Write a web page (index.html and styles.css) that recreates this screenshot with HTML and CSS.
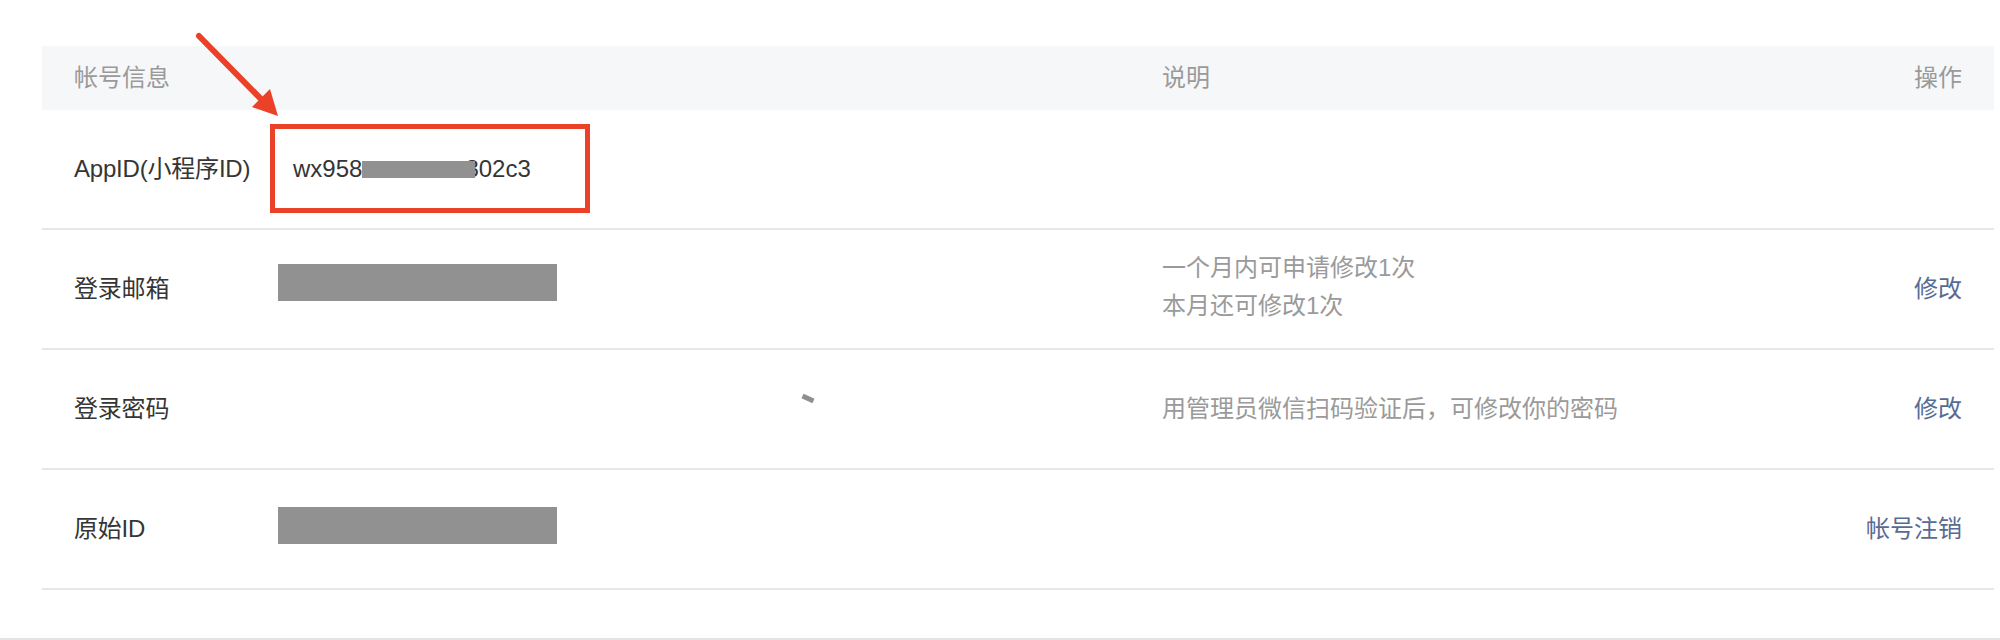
FILE: index.html
```html
<!DOCTYPE html>
<html lang="zh-CN">
<head>
<meta charset="utf-8">
<title>帐号信息</title>
<link rel="stylesheet" href="styles.css">
</head>
<body>
<div class="page">
  <div class="table">
    <div class="row head">
      <div class="cell">帐号信息</div>
      <div class="cell"></div>
      <div class="cell">说明</div>
      <div class="cell act">操作</div>
    </div>
    <div class="row">
      <div class="cell label">AppID(小程序ID)</div>
      <div class="cell value appid">wx958<span class="mask-inline"></span>302c3</div>
      <div class="cell desc"></div>
      <div class="cell act"></div>
    </div>
    <div class="row">
      <div class="cell label">登录邮箱</div>
      <div class="cell value"><span class="mask up"></span></div>
      <div class="cell desc two"><div>一个月内可申请修改1次</div><div>本月还可修改1次</div></div>
      <div class="cell act"><a class="link">修改</a></div>
    </div>
    <div class="row pw">
      <div class="cell label">登录密码</div>
      <div class="cell value"></div>
      <div class="cell desc">用管理员微信扫码验证后，可修改你的密码</div>
      <div class="cell act"><a class="link">修改</a></div>
      <span class="dash"></span>
    </div>
    <div class="row">
      <div class="cell label">原始ID</div>
      <div class="cell value"><span class="mask"></span></div>
      <div class="cell desc"></div>
      <div class="cell act"><a class="link">帐号注销</a></div>
    </div>
  </div>
  <div class="rule"></div>

  <div class="highlight"></div>
  <svg class="arrow" width="300" height="130" viewBox="0 0 300 130">
    <line x1="199" y1="36" x2="262" y2="100" stroke="#eb4128" stroke-width="6" stroke-linecap="round"/>
    <polygon points="278,116 252,107 270,89" fill="#eb4128"/>
  </svg>
</div>
</body>
</html>
```

FILE: styles.css
```css
* { box-sizing: border-box; }

html, body {
  margin: 0;
  padding: 0;
  background: #ffffff;
}

body {
  font-family: "Liberation Sans", "Noto Sans CJK SC", sans-serif;
  font-size: 24px;
  color: #353535;
}

.page {
  position: relative;
  width: 2000px;
  height: 640px;
  padding-top: 46px;
  overflow: hidden;
}

.table {
  margin-left: 42px;
  width: 1952px;
}

.row {
  position: relative;
  display: grid;
  grid-template-columns: 204px 884px 1fr auto;
  align-items: center;
  padding: 0 32px;
  height: 120px;
  border-bottom: 2px solid #e7e7eb;
}

.row.head {
  height: 64px;
  background: #f6f7f9;
  border-bottom: none;
  color: #9a9a9a;
}

.cell {
  line-height: 32px;
  white-space: nowrap;
}

.act {
  text-align: right;
}

.label {
  color: #353535;
  letter-spacing: -0.2px;
}

.appid {
  padding-left: 15px;
  color: #353535;
}

.mask-inline {
  display: inline-block;
  width: 113px;
  height: 17px;
  background: #919191;
  vertical-align: -1px;
  margin-right: -10px;
  position: relative;
}

.mask {
  display: block;
  width: 279px;
  height: 37px;
  background: #919191;
  margin-bottom: 8px;
}

.mask.up {
  margin-bottom: 14px;
}

.desc {
  color: #9a9a9a;
  line-height: 38px;
}

.desc.two {
  margin-bottom: 4px;
}

.link {
  color: #576b95;
  text-decoration: none;
}

.dash {
  position: absolute;
  left: 760px;
  top: 46px;
  width: 12px;
  height: 5px;
  background: #8f8f8f;
  transform: rotate(25deg);
}

.rule {
  margin-top: 48px;
  width: 2000px;
  height: 2px;
  background: #e4e4e6;
}

.highlight {
  position: absolute;
  left: 270px;
  top: 124px;
  width: 320px;
  height: 89px;
  border: 5px solid #eb4128;
}

.arrow {
  position: absolute;
  left: 0;
  top: 0;
}
```
